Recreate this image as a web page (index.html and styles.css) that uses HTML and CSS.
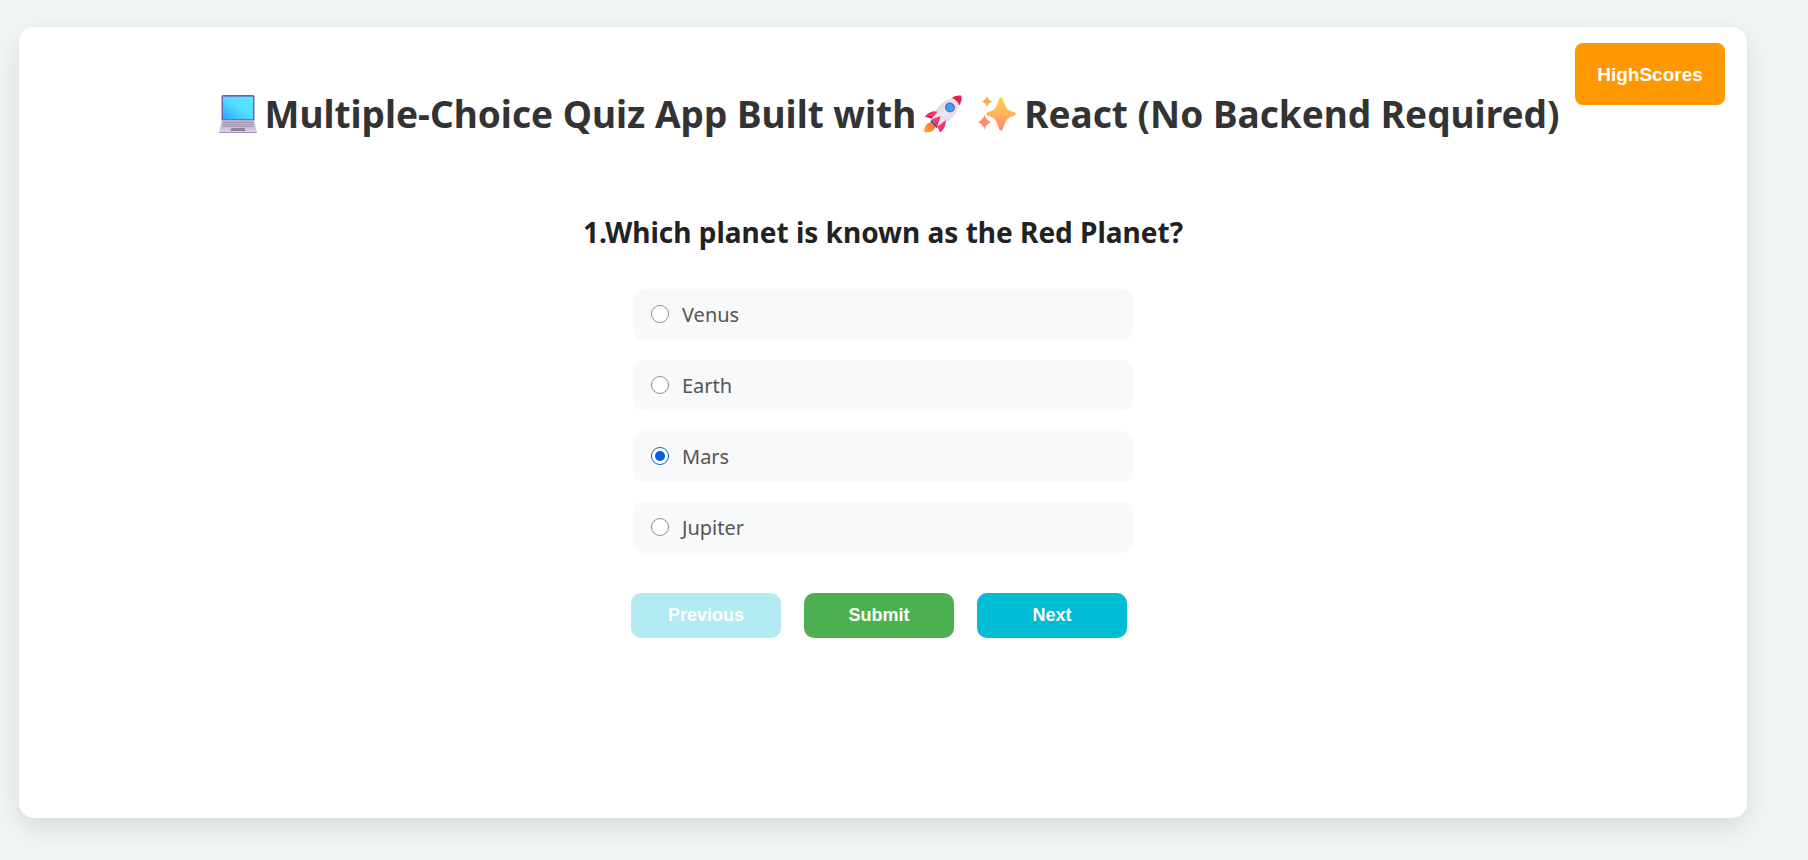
FILE: index.html
```html
<!DOCTYPE html>
<html lang="en">
<head>
<meta charset="utf-8">
<meta name="viewport" content="width=device-width, initial-scale=1">
<title>Quiz App</title>
<link rel="stylesheet" href="styles.css">
</head>
<body>
<main class="card">
  <button class="btn btn-scores" type="button">HighScores</button>
  <h1 class="title">
    <svg class="emoji" viewBox="0 0 38 38" aria-hidden="true">
      <defs>
        <linearGradient id="screen" x1="0" y1="1" x2="1" y2="0"><stop offset="0" stop-color="#2aa5ff"/><stop offset=".5" stop-color="#50dcff"/><stop offset="1" stop-color="#58e8ff"/></linearGradient>
        <linearGradient id="base" x1="0" y1="0" x2="0" y2="1"><stop offset="0" stop-color="#b5a9c4"/><stop offset="1" stop-color="#dcd3e6"/></linearGradient>
      </defs>
      <rect x="2.500" y="0" width="33" height="26" rx="1.500" fill="#7a5fae"/>
      <rect x="4" y="1.700" width="30" height="22.500" fill="url(#screen)"/>
      <path d="M3 25H35L38 37Q38 38 37 38H1Q0 38 0 37Z" fill="url(#base)"/>
      <path d="M0 37H38Q38 38 37 38H1Q0 38 0 37Z" fill="#a58fc0"/>
      <path d="M4.500 27.500H33.500M4 29.500H34M3.500 31.300H34.500" stroke="#9a8fa9" stroke-width="1.200" stroke-dasharray="1.700 .5"/>
      <path d="M12.500 33H25.500L26.500 36H11.500Z" fill="#8d819c"/>
    </svg>
    <span>Multiple-Choice Quiz App Built with</span>
    <svg class="emoji" viewBox="0 0 38 38" aria-hidden="true">
      <defs>
        <linearGradient id="hull" x1="0" y1="0" x2="1" y2="1"><stop offset="0" stop-color="#c8bfd2"/><stop offset=".5" stop-color="#eee7f3"/><stop offset="1" stop-color="#d9cde2"/></linearGradient>
        <linearGradient id="flame" x1="1" y1="0" x2="0" y2="1"><stop offset="0" stop-color="#f5642a"/><stop offset="1" stop-color="#ffad38"/></linearGradient>
      </defs>
      <path d="M7 27.500C2 28 0 32 .3 37.300C6 38 10 36 11.500 32Z" fill="url(#flame)"/>
      <path d="M13 16.500C8 16 4 18 .8 21.800L8.500 24ZM21.500 25C22 30 20 34 16 37.300L13.500 30Z" fill="#e51c50"/>
      <path d="M6.500 26.500L12.500 33L15 31L8 24Z" fill="#3d4386"/>
      <path d="M8 25C10 14 19 3 36 1.500C36.500 17 26 28 13.500 31.500Z" fill="url(#hull)"/>
      <path d="M28 2.800C31 .6 35 0 37.300 .7C38 3 37.600 7 35.500 10.500C34 7 31.500 4.500 28 2.800Z" fill="#e91f46"/>
      <path d="M10 21C5 20 2 22 .8 22C4 17 8 16 13.500 16.500ZM8 24.500L16.500 21L13.500 31.500Z" fill="#f7316c"/>
      <path d="M13.500 31.500C17 29 20 27 21.500 25C22 30 20 34 16 37.300Z" fill="#f7316c"/>
      <circle cx="26" cy="12.500" r="5" fill="#6d6d96"/><circle cx="26" cy="12.500" r="3.600" fill="#35a2fb"/>
    </svg>
    <svg class="emoji emoji-sparkles" viewBox="0 0 38 38" aria-hidden="true">
      <defs>
        <linearGradient id="star" x1="0" y1="0" x2="0" y2="1"><stop offset="0" stop-color="#ffd044"/><stop offset=".5" stop-color="#ffb45c"/><stop offset="1" stop-color="#ff8270"/></linearGradient>
      </defs>
      <path d="M21.500 3.500Q23 1 24.500 3.500L28 12Q29 14.500 31.500 15.500L37 17.500Q38.500 19 37 20.300L31.500 22.500Q29 23.500 28 26L24.500 34.500Q23 37 21.500 34.500L18 26Q17 23.500 14.500 22.500L9 20.300Q7.500 19 9 17.500L14.500 15.500Q17 14.500 18 12Z" fill="url(#star)"/>
      <path d="M9 1Q10 5 14 6.500Q10 8 9 12.500Q8 8 4 6.500Q8 5 9 1Z" fill="#f4ad4a"/>
      <path d="M6.500 20Q8 25 13 27Q8 29 6.500 34.500Q5 29 0 27Q5 25 6.500 20Z" fill="#ff8d61"/>
    </svg>
    <span>React (No Backend Required)</span>
  </h1>
  <form class="quiz">
    <fieldset class="question">
      <legend class="question-text">1.Which planet is known as the Red Planet?</legend>
      <div class="options">
        <label class="option"><input type="radio" name="answer" value="Venus"><span>Venus</span></label>
        <label class="option"><input type="radio" name="answer" value="Earth"><span>Earth</span></label>
        <label class="option"><input type="radio" name="answer" value="Mars" checked><span>Mars</span></label>
        <label class="option"><input type="radio" name="answer" value="Jupiter"><span>Jupiter</span></label>
      </div>
    </fieldset>
    <div class="actions">
      <button class="btn btn-nav" type="button" disabled>Previous</button>
      <button class="btn btn-submit" type="button">Submit</button>
      <button class="btn btn-nav" type="button">Next</button>
    </div>
  </form>
</main>
</body>
</html>
```
FILE: styles.css
```css
* {
  box-sizing: border-box;
}

body {
  display: flex;
  min-height: 100vh;
  margin: 0;
  padding: 27px 61px 42px 19px;
  background: #f2f6f7;
  color: #333;
  font-family: "Segoe UI", "Noto Sans", sans-serif;
}

.card {
  position: relative;
  flex: 1;
  padding: 59px 20px;
  border-radius: 15px;
  background: #fff;
  box-shadow: 0 10px 30px rgba(0, 0, 0, 0.12);
}

.title {
  display: flex;
  flex-wrap: wrap;
  align-items: center;
  justify-content: center;
  gap: 8px;
  margin: 0 0 70px;
  padding-left: 12px;
  font-size: 37px;
  font-weight: 700;
  line-height: 56px;
}

.emoji {
  flex: none;
  width: 38px;
  height: 38px;
}

.emoji-sparkles {
  margin-left: 8px;
}

.quiz {
  display: flex;
  flex-direction: column;
  align-items: center;
}

.question {
  display: flex;
  flex-direction: column;
  align-items: center;
  width: 100%;
  margin: 0;
  padding: 0;
  border: 0;
}

.question-text {
  margin: 0 auto 37px;
  padding: 0;
  color: #222;
  font-size: 28px;
  font-weight: 700;
  line-height: 40px;
  text-align: center;
}

.options {
  display: grid;
  gap: 20px;
  width: 100%;
  max-width: 500px;
}

.option {
  display: flex;
  align-items: center;
  gap: 13px;
  padding: 12px 18px;
  border-radius: 10px;
  background: #f8f9fb;
  color: #555;
  font-size: 20px;
  line-height: 27px;
}

.option input {
  display: grid;
  place-items: center;
  width: 18px;
  height: 18px;
  margin: 0 0 2px;
  border: 1px solid #8f8f9d;
  border-radius: 50%;
  background: #fff;
  appearance: none;
}

.option input:checked {
  border-color: #0060df;
}

.option input:checked::before {
  width: 10px;
  height: 10px;
  border-radius: 50%;
  background: #0060df;
  content: "";
}

.actions {
  display: flex;
  flex-wrap: wrap;
  gap: 23px;
  margin-top: 40px;
  padding-right: 8px;
}

.btn {
  width: 150px;
  padding: 12px 20px;
  border: 0;
  border-radius: 10px;
  color: #fff;
  font: 700 18px/21px "Liberation Sans", Arial, sans-serif;
  cursor: pointer;
}

.btn-nav {
  background: #00bcd4;
}

.btn-nav:disabled {
  background: #b2ebf2;
  cursor: default;
}

.btn-submit {
  background: #4caf50;
}

.btn-scores {
  position: absolute;
  top: 16px;
  right: 22px;
  height: 62px;
  border-radius: 8px;
  background: #ff9800;
  font-size: 19px;
}
```
